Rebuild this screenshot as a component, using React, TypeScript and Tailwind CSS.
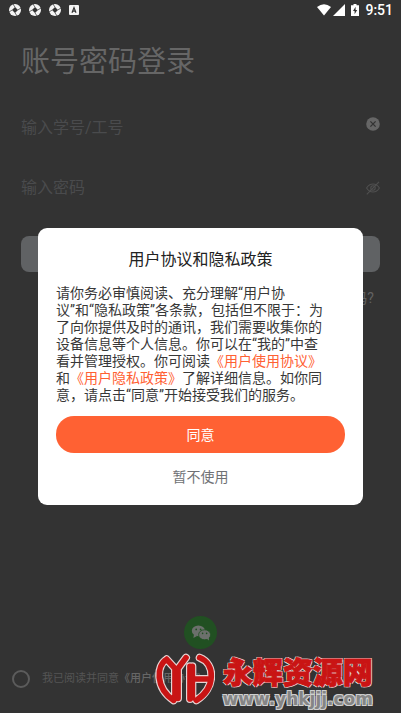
import React, { useState } from "react";

function SyncIcon() {
  return (
    <svg viewBox="0 0 12 12" className="size-3" aria-hidden="true">
      <circle cx="6" cy="6" r="6" fill="#f4f4f4" />
      <path d="M6 3 9 6 6 9 3 6Z" fill="#333" />
      <path d="M4 0 6 3.2M12 4 8.8 6M8 12 6 8.8M0 8 3.2 6" stroke="#333" strokeWidth="0.7" />
    </svg>
  );
}

function StatusBar() {
  return (
    <div className="flex h-5 items-center justify-between px-2 text-white">
      <div className="flex items-center gap-2 pl-px">
        <SyncIcon />
        <SyncIcon />
        <SyncIcon />
        <svg viewBox="0 0 10 10" className="size-2.5" aria-hidden="true">
          <rect width="10" height="10" rx="1" fill="#f4f4f4" />
          <path d="M3 7.8 5 2.6 7 7.8M3.8 6.2H6.2" fill="none" stroke="#333" strokeWidth="1.2" />
        </svg>
      </div>
      <div className="flex items-center">
        <svg viewBox="0 0 14 12" className="h-3 w-3.5" fill="currentColor" aria-hidden="true">
          <path d="M0 3Q7-2.4 14 3L7 11.6Z" />
        </svg>
        <svg viewBox="0 0 12 12" className="ml-0.5 size-3" fill="currentColor" aria-hidden="true">
          <path d="M12 0V12H0Z" />
        </svg>
        <svg viewBox="0 0 8 12" className="ml-1.5 mr-1.5 h-3 w-2" aria-hidden="true">
          <path d="M2.5 0h3v1.2H8V12H0V1.2h2.5Z" fill="currentColor" />
          <path d="M4.6 2.8 2 7h1.6v3.2L6.2 6H4.6Z" fill="#333" />
        </svg>
        <span className="font-[Roboto] text-sm font-medium">9:51</span>
      </div>
    </div>
  );
}

function LoginForm() {
  return (
    <form className="px-[21px]" onSubmit={(e) => e.preventDefault()}>
      <h1 className="mt-[22px] text-[29px] leading-10 text-[#666]">账号密码登录</h1>
      <div className="mt-[26px] flex h-10 items-center">
        <input
          aria-label="学号/工号"
          placeholder="输入学号/工号"
          className="min-w-0 flex-1 bg-transparent text-base outline-none placeholder:text-[#4a4b4d]"
        />
        <button type="button" aria-label="清除" className="-mt-2">
          <svg viewBox="0 0 14 14" className="size-3.5">
            <circle cx="7" cy="7" r="6.8" fill="#666" />
            <path d="m4.4 4.4 5.2 5.2M9.6 4.4 4.4 9.6" stroke="#333" strokeWidth="1.3" />
          </svg>
        </button>
      </div>
      <div className="mt-5 flex h-10 items-center">
        <input
          type="password"
          aria-label="密码"
          placeholder="输入密码"
          className="min-w-0 flex-1 bg-transparent text-base outline-none placeholder:text-[#4a4b4d]"
        />
        <button type="button" aria-label="显示密码">
          <svg viewBox="0 0 14 14" className="size-3.5" fill="none" stroke="#505050" strokeWidth="1.1">
            <path d="M.6 7Q3 3 7 3t6.4 4Q11 11 7 11T.6 7Z" />
            <circle cx="7" cy="7" r="2.2" />
            <path d="M13 .8.8 13.4" />
          </svg>
        </button>
      </div>
      <button type="submit" aria-label="登录" className="mt-7 block h-9 w-full rounded-lg bg-[#606264]" />
      <div className="mt-4 flex justify-end pr-1.5">
        <a href="#forgot" className="text-sm text-[#626262]">
          忘记密码?
        </a>
      </div>
    </form>
  );
}

function PageFooter() {
  return (
    <footer className="mt-auto pb-6">
      <button
        type="button"
        aria-label="微信登录"
        className="mx-auto flex size-[33px] items-center justify-center rounded-full bg-[#215022]"
      >
        <svg viewBox="0 0 20 16" className="h-4 w-5" aria-hidden="true">
          <ellipse cx="7.4" cy="5.8" rx="6.6" ry="5.4" fill="#6c706c" />
          <path d="M3 9 2.4 13 6 11Z" fill="#6c706c" />
          <ellipse cx="13.6" cy="9.8" rx="6" ry="5" fill="#6c706c" stroke="#215022" strokeWidth="0.8" />
          <path d="M15.5 13.6 18 15.6 17.8 12.4Z" fill="#6c706c" />
          <g fill="#215022">
            <circle cx="5.2" cy="4.4" r="0.9" />
            <circle cx="9.6" cy="4.4" r="0.9" />
            <circle cx="11.6" cy="8.4" r="0.8" />
            <circle cx="15.6" cy="8.4" r="0.8" />
          </g>
        </svg>
      </button>
      <div className="mt-5 flex items-center pl-3">
        <input
          id="agree"
          type="checkbox"
          className="size-[18px] shrink-0 appearance-none rounded-full border-2 border-[#5c5c5c]"
        />
        <label htmlFor="agree" className="ml-3 whitespace-nowrap text-[11px] leading-5 text-[#555]">
          我已阅读并同意
          <span className="font-medium text-[#666]">《用户使用协议》</span>
        </label>
      </div>
    </footer>
  );
}

function ConsentDialog({ onClose }: { onClose: () => void }) {
  return (
    <div className="absolute inset-x-0 bottom-0 top-5 flex items-center px-[38px]">
      <section
        role="dialog"
        aria-labelledby="consent-title"
        className="w-full rounded-[9px] bg-white px-[18px] pb-4 pt-5 text-center"
      >
        <h2 id="consent-title" className="text-base text-[#222]">
          用户协议和隐私政策
        </h2>
        <p className="mt-[13px] whitespace-nowrap text-left text-sm leading-[17px] text-[#383838]">
          请你务必审慎阅读、充分理解“用户协
          <br />
          议”和“隐私政策”各条款，包括但不限于：为
          <br />
          了向你提供及时的通讯，我们需要收集你的
          <br />
          设备信息等个人信息。你可以在“我的”中查
          <br />
          看并管理授权。你可阅读
          <a href="#terms" className="text-[#ff6133]">《用户使用协议》</a>
          <br />
          和<a href="#privacy" className="text-[#ff6133]">《用户隐私政策》</a>了解详细信息。如你同
          <br />
          意，请点击“同意”开始接受我们的服务。
        </p>
        <button
          type="button"
          onClick={onClose}
          className="mt-3 block h-[37px] w-full rounded-[18px] bg-[#ff6133] text-sm text-white"
        >
          同意
        </button>
        <button type="button" className="mx-auto mt-3 block text-sm leading-6 text-[#6f7175]">
          暂不使用
        </button>
      </section>
    </div>
  );
}

const logoStrokes =
  "M45 147C14 166 10 232 66 270M45 147 75 180 103 142M70 178V264M79 178V264M115 168V266M122 168V262M115 206H178M144 142C192 160 192 234 134 270";

function Watermark() {
  return (
    <div className="pointer-events-none absolute bottom-1 right-7 flex items-start gap-2">
      <svg
        viewBox="10 122 180 162"
        className="-mt-1.5 h-[54px] w-[60px]"
        fill="none"
        strokeLinecap="round"
        aria-hidden="true"
      >
        <path d={logoStrokes} stroke="#e6d4d4" strokeWidth="24" />
        <path d={logoStrokes} stroke="#c91414" strokeWidth="17" />
      </svg>
      <div className="text-center">
        <div className="text-3xl font-black leading-8 text-[#c91414] [-webkit-text-stroke:1px_#c91414] [text-shadow:1px_1px_0_#e6d4d4,-1px_1px_0_#e6d4d4,1px_-1px_0_#e6d4d4,-1px_-1px_0_#e6d4d4]">
          永辉资源网
        </div>
        <div className="font-['DejaVu_Sans'] text-[17px] font-bold leading-5 text-[#858585] [text-shadow:1px_1px_0_#cfcfcf,-1px_1px_0_#cfcfcf,1px_-1px_0_#cfcfcf,-1px_-1px_0_#cfcfcf]">
          www.yhkjjj.com
        </div>
      </div>
    </div>
  );
}

export default function App() {
  const [open, setOpen] = useState(true);
  return (
    <main className="relative flex min-h-screen flex-col overflow-hidden bg-[#333] font-[Roboto,'Noto_Sans_CJK_SC',sans-serif]">
      <StatusBar />
      <LoginForm />
      <PageFooter />
      {open && <ConsentDialog onClose={() => setOpen(false)} />}
      <Watermark />
    </main>
  );
}
